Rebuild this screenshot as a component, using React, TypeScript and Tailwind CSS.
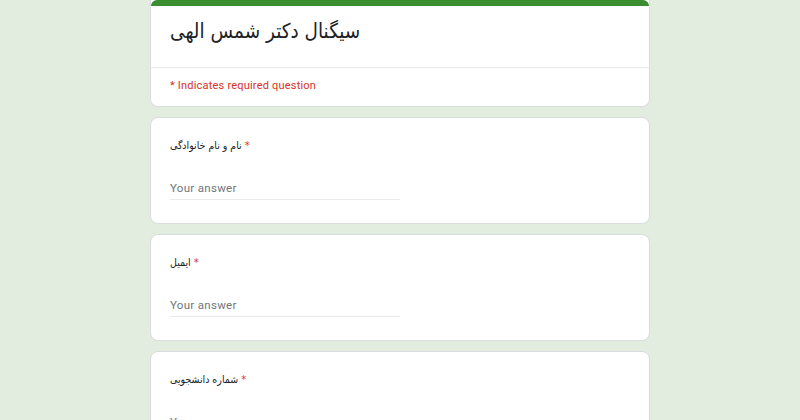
const QUESTIONS = ["نام و نام خانوادگی", "ایمیل", "شماره دانشجویی"]

function Question({ label }: { label: string }) {
  return (
    <div className="bg-white border border-[#dadce0] rounded-lg h-[107px] px-[19px] pt-[18px] shrink-0">
      <div className="text-[10.5px] text-[#202124] leading-[18px] font-['DejaVu_Sans',sans-serif] [font-stretch:condensed]">
        <span>{label}</span>
        <span className="text-[#d93025] text-[11px]"> *</span>
      </div>
      <div className="mt-[23px] w-[230px] border-b border-[#e8eaed] pb-[3px] leading-[16px]">
        <span className="text-[11.5px] text-[#70757a] font-['Roboto',sans-serif] tracking-[0.3px]">Your answer</span>
      </div>
    </div>
  )
}

export default function App() {
  return (
    <div className="w-[800px] h-[420px] overflow-hidden bg-[#e2ede0]">
      <div className="w-[500px] mx-auto flex flex-col gap-[10px]">
        <div className="bg-white border border-[#dadce0] border-t-0 rounded-b-lg overflow-hidden h-[107px] shrink-0">
          <div className="h-[6px] bg-[#3b8d32] rounded-t-lg" />
          <div className="px-[19px] pt-[10px] h-[62px] border-b border-[#e8eaed]">
            <h1 className="text-[20.5px] leading-[30px] text-[#202124] font-['DejaVu_Sans',sans-serif] [font-stretch:condensed]">سیگنال دکتر شمس الهی</h1>
          </div>
          <div className="px-[19px] pt-[10px] text-[11px] leading-[16px] text-[#d93025] font-['Roboto',sans-serif] tracking-[0.2px]">
            * Indicates required question
          </div>
        </div>
        {QUESTIONS.map((q) => (
          <Question key={q} label={q} />
        ))}
      </div>
    </div>
  )
}
